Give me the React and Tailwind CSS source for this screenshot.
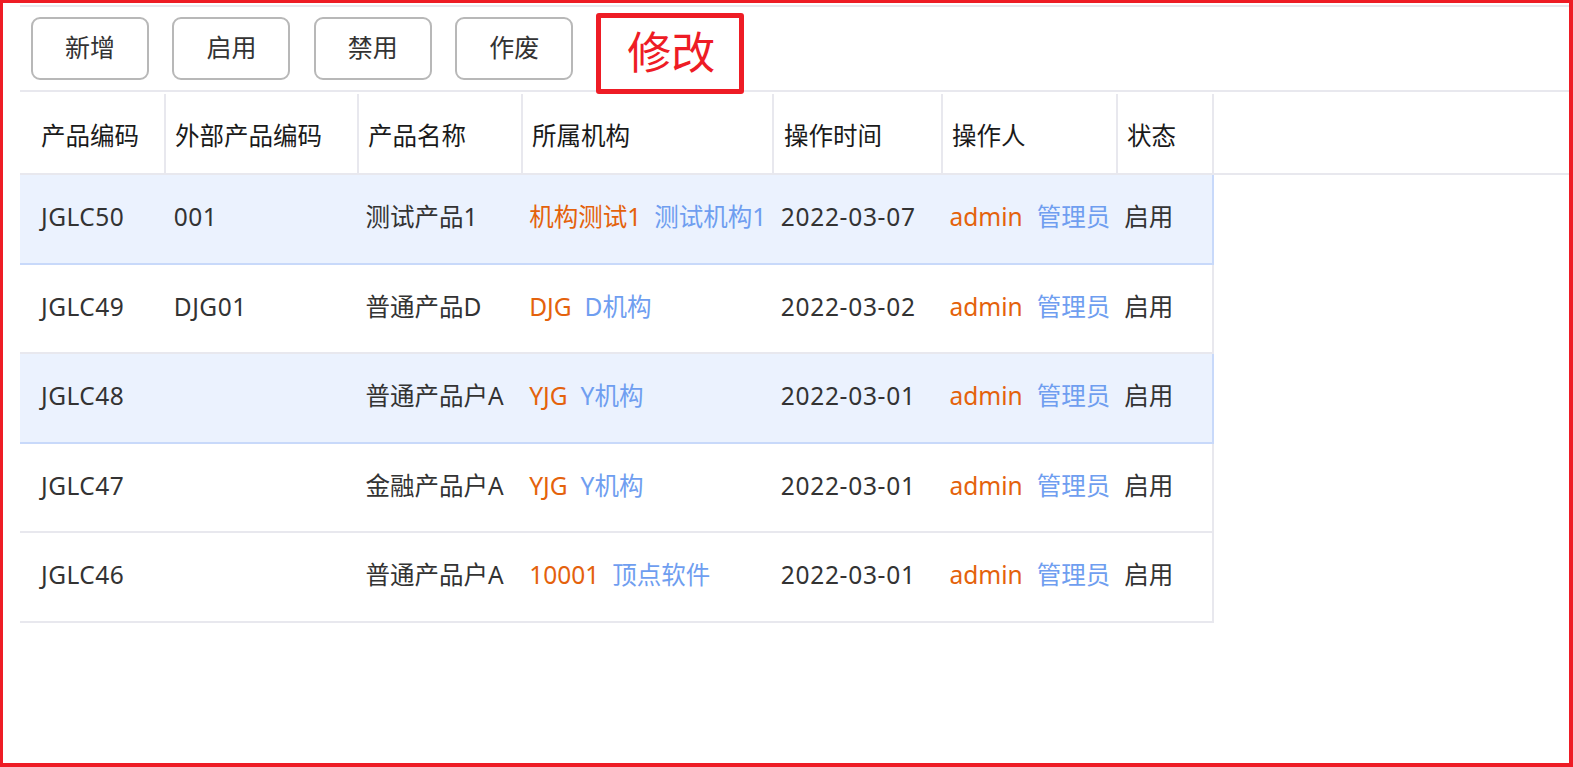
import React from "react";

const cols = [
  { w: "w-[146px]", hp: "pl-[21px]", bp: "pl-[21px]" },
  { w: "w-[193px]", hp: "pl-[9px]", bp: "pl-[8px]" },
  { w: "w-[164px]", hp: "pl-[9px]", bp: "pl-[7px]" },
  { w: "w-[251px]", hp: "pl-[9px]", bp: "pl-[7px]" },
  { w: "w-[169px]", hp: "pl-[10px]", bp: "pl-[8px]" },
  { w: "w-[175px]", hp: "pl-[9px]", bp: "pl-[8px]" },
  { w: "w-[96px]", hp: "pl-[9px]", bp: "pl-[8px]" },
];

const headers = ["产品编码", "外部产品编码", "产品名称", "所属机构", "操作时间", "操作人", "状态"];

const rows = [
  { code: "JGLC50", ext: "001", name: "测试产品1", org: ["机构测试1", "测试机构1"], time: "2022-03-07", sel: true },
  { code: "JGLC49", ext: "DJG01", name: "普通产品D", org: ["DJG", "D机构"], time: "2022-03-02", sel: false },
  { code: "JGLC48", ext: "", name: "普通产品户A", org: ["YJG", "Y机构"], time: "2022-03-01", sel: true },
  { code: "JGLC47", ext: "", name: "金融产品户A", org: ["YJG", "Y机构"], time: "2022-03-01", sel: false },
  { code: "JGLC46", ext: "", name: "普通产品户A", org: ["10001", "顶点软件"], time: "2022-03-01", sel: false },
];

function Btn({ children }) {
  return (
    <div className="w-[118px] h-[63px] rounded-[9px] border-2 border-[#b8b8b8] bg-white flex items-center justify-center text-[25px] text-[#333] pb-[2px]">
      {children}
    </div>
  );
}

export default function App() {
  return (
    <div className="w-[1573px] h-[767px] bg-white border-t-[3px] border-l-[3px] border-r-4 border-b-4 border-[#ee1c25] font-['Noto_Sans','Noto_Sans_CJK_SC',sans-serif] overflow-hidden">
      <div className="pl-[17px]">
        <div className="mt-[2px] h-[2px] bg-[#e8e8ee]" />
        <div className="h-[83px] flex items-start pl-[11px]">
          <div className="mt-[10px] flex gap-[23.4px]">
            <Btn>新增</Btn>
            <Btn>启用</Btn>
            <Btn>禁用</Btn>
            <Btn>作废</Btn>
          </div>
          <div className="relative z-10 ml-[23px] mt-[6px] w-[148px] h-[81px] border-[5px] border-[#ee1c25] rounded-[3px] bg-white flex items-center justify-center text-[44px] text-[#ee1c25] leading-none pb-[4px] pl-[2px]">
            修改
          </div>
        </div>
        <div className="h-[2px] bg-[#e8e8ee]" />
        <div className="h-[83px] flex border-b-2 border-[#e8e8ee]">
          {headers.map((h, i) => (
            <div
              key={h}
              className={`${cols[i].w} ${cols[i].hp} mt-[2px] border-r-2 border-[#e8e8ee] flex items-center pt-[5px] text-[24.5px] text-[#1a1a1a] whitespace-nowrap`}
            >
              {h}
            </div>
          ))}
        </div>
        <div className="w-[1194px]">
          {rows.map((r, idx) => {
            const cells = [
              <span key="c" className="tracking-[0.5px]">{r.code}</span>,
              <span key="e" className="tracking-[0.5px]">{r.ext}</span>,
              r.name,
              <span key="o" className="whitespace-nowrap">
                <span className="text-[#e4620c]">{r.org[0]}</span>
                <span className="ml-[13px] text-[#6f9ef0]">{r.org[1]}</span>
              </span>,
              <span key="t" className="tracking-[0.7px]">{r.time}</span>,
              <span key="p" className="whitespace-nowrap">
                <span className="text-[#e4620c]">admin</span>
                <span className="ml-[14px] text-[#6f9ef0]">管理员</span>
              </span>,
              "启用",
            ];
            return (
              <div
                key={idx}
                className={
                  r.sel
                    ? "h-[89.5px] flex border-b-2 border-r-2 border-[#c8d9fa] bg-[#ebf2fe]"
                    : "h-[89.5px] flex border-b-2 border-r-2 border-[#e8e8ee] bg-white"
                }
              >
                {cells.map((c, i) => (
                  <div
                    key={i}
                    className={`${cols[i].w} ${cols[i].bp} flex items-center text-[24.5px] text-[#333] whitespace-nowrap overflow-visible pb-[2px]`}
                  >
                    {c}
                  </div>
                ))}
              </div>
            );
          })}
        </div>
      </div>
    </div>
  );
}
